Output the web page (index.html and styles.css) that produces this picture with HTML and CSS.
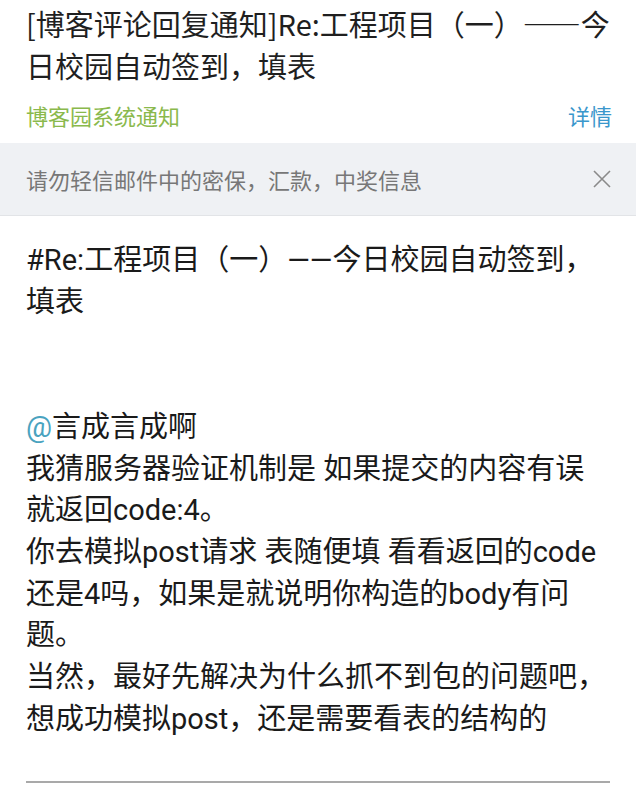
FILE: index.html
```html
<!DOCTYPE html>
<html lang="zh-CN">
<head>
<meta charset="utf-8">
<title>博客评论回复通知</title>
<link rel="stylesheet" href="styles.css">
</head>
<body>
<div class="page">
  <header class="head">
    <h1 class="title">[博客评论回复通知]Re:工程项目（一）——今日校园自动签到，填表</h1>
    <div class="meta">
      <span class="sender">博客园系统通知</span>
      <span class="detail">详情</span>
    </div>
  </header>
  <div class="notice">
    <span class="notice-text">请勿轻信邮件中的密保，汇款，中奖信息</span>
    <svg class="close" width="18" height="18" viewBox="0 0 18 18" aria-hidden="true">
      <path d="M1 1L17 17M17 1L1 17" stroke="#8a8a8a" stroke-width="1.6" fill="none"/>
    </svg>
  </div>
  <main class="content">
    <p class="para">#Re:工程项目（一）——今日校园自动签到，填表</p>
    <p class="para gap"><span class="at">@</span>言成言成啊</p>
    <p class="para">我猜服务器验证机制是 如果提交的内容有误就返回code:4。</p>
    <p class="para">你去模拟post请求 表随便填 看看返回的code还是4吗，如果是就说明你构造的body有问题。</p>
    <p class="para">当然，最好先解决为什么抓不到包的问题吧，想成功模拟post，还是需要看表的结构的</p>
    <hr class="rule">
  </main>
</div>
</body>
</html>
```

FILE: styles.css
```css
* { box-sizing: border-box; }
html, body { margin: 0; padding: 0; background: #ffffff; }
body {
  font-family: Roboto, "Noto Sans CJK SC", sans-serif;
  color: #1c1c1c;
}
.page { width: 636px; }
.head { padding: 2px 24px 0 26px; }
.title {
  margin: 0;
  font-family: "Noto Sans CJK SC", Roboto, sans-serif;
  font-weight: 400;
  font-size: 29px;
  line-height: 42px;
  color: #1f1f1f;
}
.meta {
  display: flex;
  justify-content: space-between;
  align-items: center;
  height: 57px;
  font-size: 22px;
}
.sender { color: #8ab94c; }
.detail { color: #3a97cc; }
.notice {
  display: flex;
  justify-content: space-between;
  align-items: center;
  height: 73px;
  padding: 0 25px 0 26px;
  background: #eff1f4;
  border-bottom: 1px solid #e2e4e7;
  font-size: 22px;
  color: #777777;
}
.close { display: block; }
.content {
  padding: 24px 26px 0 26px;
  width: 636px;
}
.para {
  margin: 0;
  font-size: 29px;
  line-height: 41.7px;
  color: #1a1a1a;
}
.gap { margin-top: 83.4px; }
.at { color: #4aa3bf; }
.rule {
  margin: 41px 0 0 0;
  border: 0;
  height: 2px;
  background: #a9a9a9;
}
```
